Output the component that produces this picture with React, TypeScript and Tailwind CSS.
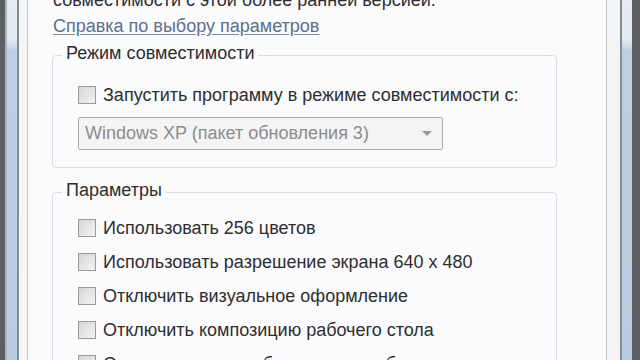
import React from "react";

const font = { fontFamily: '"Liberation Sans", Arial, sans-serif' };

function Check({ label }: { label: string }) {
  return (
    <div className="flex items-center h-[34px] min-w-0">
      <div className="w-[18px] h-[18px] border border-[#9a9a9a] bg-[linear-gradient(135deg,#d4d4d4,#f3f3f3)] p-[2px] shrink-0">
        <div className="w-full h-full bg-[linear-gradient(135deg,#dadada,#f0f0f0)]" />
      </div>
      <span className="ml-[7px] text-[18px] text-[#2e2e2e] leading-[22px] whitespace-nowrap">{label}</span>
    </div>
  );
}

export default function App() {
  return (
    <div className="w-[640px] h-[360px] overflow-hidden flex bg-[#fbfbfd]" style={font}>
      {/* left frame */}
      <div className="w-[5px] h-full bg-[#5d6063] shrink-0" />
      <div className="w-[2px] h-full bg-[#aab4be] shrink-0" />
      <div className="w-[10px] h-full bg-[linear-gradient(to_bottom,#e4ebf2_0%,#e1e9f1_11%,#bcd0e4_14%,#b9cde2_100%)] shrink-0" />
      <div className="w-[2px] h-full bg-[#858b91] shrink-0" />
      <div className="w-[8px] h-full bg-[#f4f5f7] shrink-0" />
      {/* tab page */}
      <div className="flex-1 h-full border-l border-r border-[#c4c6c8] bg-[#fbfbfd] overflow-hidden">
        <div className="ml-[24px] w-[505px]">
          <p className="mt-[-12px] ml-[1px] text-[18px] leading-[24px] text-[#2e2e2e] whitespace-nowrap">
            совместимости с этой более ранней версией.
          </p>
          <a className="block mt-[2px] ml-[1px] text-[18px] leading-[24px] text-[#5c6f8c] underline underline-offset-[2px] decoration-[#7d8ca3] whitespace-nowrap">
            Справка по выбору параметров
          </a>
          <fieldset className="mt-[7px] min-w-0 border border-[#dcdde0] rounded-[4px] h-[123px] pl-[25px]">
            <legend className="ml-[-16px] px-[4px] text-[18px] leading-[20px] text-[#2e2e2e]">
              <span className="relative top-[-2px]">Режим совместимости</span>
            </legend>
            <div className="mt-[13px]">
              <Check label="Запустить программу в режиме совместимости с:" />
            </div>
            <div className="mt-[5px] w-[365px] h-[33px] border border-[#a9abad] rounded-[2px] bg-[#f4f4f5] flex items-center justify-between pl-[6px] pr-[10px]">
              <span className="text-[18px] text-[#8c8c8c] whitespace-nowrap">Windows XP (пакет обновления 3)</span>
              <svg width="10" height="6" viewBox="0 0 10 6">
                <path d="M0 0 L10 0 L5 5 Z" fill="#9a9a9a" />
              </svg>
            </div>
          </fieldset>
          <fieldset className="mt-[14px] min-w-0 border border-[#dcdde0] rounded-[4px] h-[220px] pl-[25px]">
            <legend className="ml-[-16px] px-[4px] text-[18px] leading-[20px] text-[#2e2e2e]">
              <span className="relative top-[-2px]">Параметры</span>
            </legend>
            <div className="mt-[9px] flex flex-col min-w-0 overflow-hidden">
              <Check label="Использовать 256 цветов" />
              <Check label="Использовать разрешение экрана 640 x 480" />
              <Check label="Отключить визуальное оформление" />
              <Check label="Отключить композицию рабочего стола" />
              <Check label="Отключить масштабирование изображения при высоком разрешении экрана" />
            </div>
          </fieldset>
        </div>
      </div>
      {/* right frame */}
      <div className="w-[13px] h-full bg-[#f3f4f6] shrink-0" />
      <div className="w-[2px] h-full bg-[#858b91] shrink-0" />
      <div className="w-[10px] h-full bg-[linear-gradient(to_bottom,#e4ebf2_0%,#e1e9f1_11%,#bcd0e4_14%,#b9cde2_100%)] shrink-0" />
      <div className="w-[8px] h-full bg-[#5d6063] shrink-0" />
    </div>
  );
}
